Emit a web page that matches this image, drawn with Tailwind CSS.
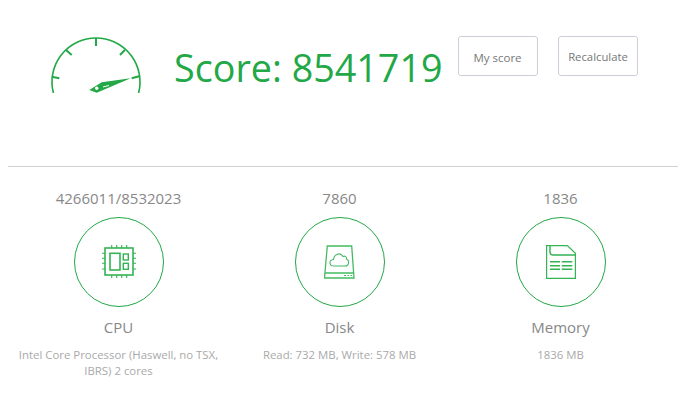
<!DOCTYPE html>
<html lang="en">
<head>
  <meta charset="UTF-8" />
  <title>Benchmark</title>
  <script src="https://cdn.jsdelivr.net/npm/@tailwindcss/browser@4"></script>
</head>
<body class="bg-white font-['Open_Sans',sans-serif] w-[686px] h-[410px] overflow-hidden">
  <!-- score header -->
  <div class="flex items-start h-[166px] pl-[50px]">
    <svg class="w-[92px] h-[60px] mt-[37px] text-[#22a846]" viewBox="50 37 92 60" fill="none" stroke="currentColor" stroke-width="2">
      <path d="M53.4 93 A44 44 0 1 1 138.6 93" stroke-width="1.6" />
      <path d="M96 38.3 V46 M66 50 L71.7 55 M124.8 50 L120 55 M51.7 76.7 L59.3 78.3 M140 76 L131.7 78.3" />
      <path d="M130.7 78.3 L101.7 82.3 L89.3 90 L96.7 92.7 Z" fill="currentColor" stroke="none" />
      <circle cx="96.7" cy="88.3" r="1.7" fill="#fff" stroke="none" />
      <path d="M103 87 L109 85.5" stroke="#fff" stroke-width="1" />
    </svg>
    <div class="ml-[32px] mt-[40px] text-[37.7px] leading-[56px] text-[#22a846] whitespace-nowrap">Score: 8541719</div>
    <button class="ml-[15px] mt-[36px] w-[80px] h-[40px] pt-[3px] border border-[#cfcdd8] rounded-[3px] text-[11.5px] text-[#777]">My score</button>
    <button class="ml-[20px] mt-[36px] w-[80px] h-[40px] pt-[3px] pl-[1px] border border-[#cfcdd8] rounded-[3px] text-[11.3px] text-[#777]">Recalculate</button>
  </div>
  <hr class="ml-[8px] w-[670px] border-t border-[#d0d0d0]" />

  <!-- metrics -->
  <div class="flex pl-[8px] pt-[21px]">
    <div class="w-[221px] flex flex-col items-center">
      <div class="text-[15px] leading-[20px] text-[#888]">4266011/8532023</div>
      <div class="mt-[9px] w-[90px] h-[90px] rounded-full border border-[#22a846] flex items-center justify-center">
        <svg class="w-[34px] h-[34px] text-[#33b354]" viewBox="0 0 34 34" fill="none" stroke="currentColor" stroke-width="1.4">
          <rect x="3" y="3" width="28" height="27" stroke-width="1.6" />
          <rect x="8" y="8.3" width="10" height="16.7" stroke-width="1.6" />
          <rect x="21.3" y="9" width="5" height="6" />
          <rect x="21.3" y="18.3" width="5" height="6" />
          <path d="M9.7 0 V3 M14.7 0 V3 M19.7 0 V3 M24.7 0 V3 M9.7 30 V33 M14.7 30 V33 M19.7 30 V33 M24.7 30 V33 M0 8.3 H3 M0 13.3 H3 M0 18.3 H3 M0 24 H3 M31 8.3 H34 M31 13.3 H34 M31 18.3 H34 M31 24 H34" stroke-width="1.1" />
        </svg>
      </div>
      <div class="mt-[10px] text-[15px] leading-[20px] text-[#888]">CPU</div>
      <div class="mt-[10px] w-[210px] text-center text-[11.4px] leading-[16px] text-[#aaa]">Intel Core Processor (Haswell, no TSX, IBRS) 2 cores</div>
    </div>
    <div class="w-[221px] flex flex-col items-center">
      <div class="text-[15px] leading-[20px] text-[#888]">7860</div>
      <div class="mt-[9px] w-[90px] h-[90px] rounded-full border border-[#22a846] flex items-center justify-center">
        <svg class="w-[32px] h-[34px] text-[#45ba62]" viewBox="0 0 32 34" fill="none" stroke="currentColor" stroke-width="1.3">
          <path d="M3.3 1 H27.7 L30 33 H.5 Z M1 28 H30" />
          <path d="M10 21 C5 21 4.5 15 9.5 14.5 C10 9.5 16 6.5 19 11.5 C21 10.5 23 12 22.5 14 C25.5 15 25.5 21 21 21 Z" stroke-width="1.1" />
          <path d="M20 30.5 H22 M23.5 30.5 H25 M26.5 30.5 H28" stroke-width="1" />
        </svg>
      </div>
      <div class="mt-[10px] text-[15px] leading-[20px] text-[#888]">Disk</div>
      <div class="mt-[10px] text-[11.4px] leading-[16px] text-[#aaa]">Read: 732 MB, Write: 578 MB</div>
    </div>
    <div class="w-[221px] flex flex-col items-center">
      <div class="text-[15px] leading-[20px] text-[#888]">1836</div>
      <div class="mt-[9px] w-[90px] h-[90px] rounded-full border border-[#22a846] flex items-center justify-center">
        <svg class="w-[30px] h-[34px] text-[#33b354]" viewBox="0 0 30 34" fill="none" stroke="currentColor" stroke-width="1.2">
          <path d="M.6 .6 H21.3 L29.4 8.3 V33.4 H.6 Z" />
          <path d="M4 1 V7 Q4 10 7 10 H29" stroke-width="1.4" />
          <path d="M4 16.7 H14 M15.7 16.7 H26.3 M4 20.7 H14 M15.7 20.7 H26.3 M4 24.3 H14 M15.7 24.3 H26.3" stroke-width="1.5" />
        </svg>
      </div>
      <div class="mt-[10px] text-[15px] leading-[20px] text-[#888]">Memory</div>
      <div class="mt-[10px] text-[11.4px] leading-[16px] text-[#aaa]">1836 MB</div>
    </div>
  </div>
</body>
</html>
